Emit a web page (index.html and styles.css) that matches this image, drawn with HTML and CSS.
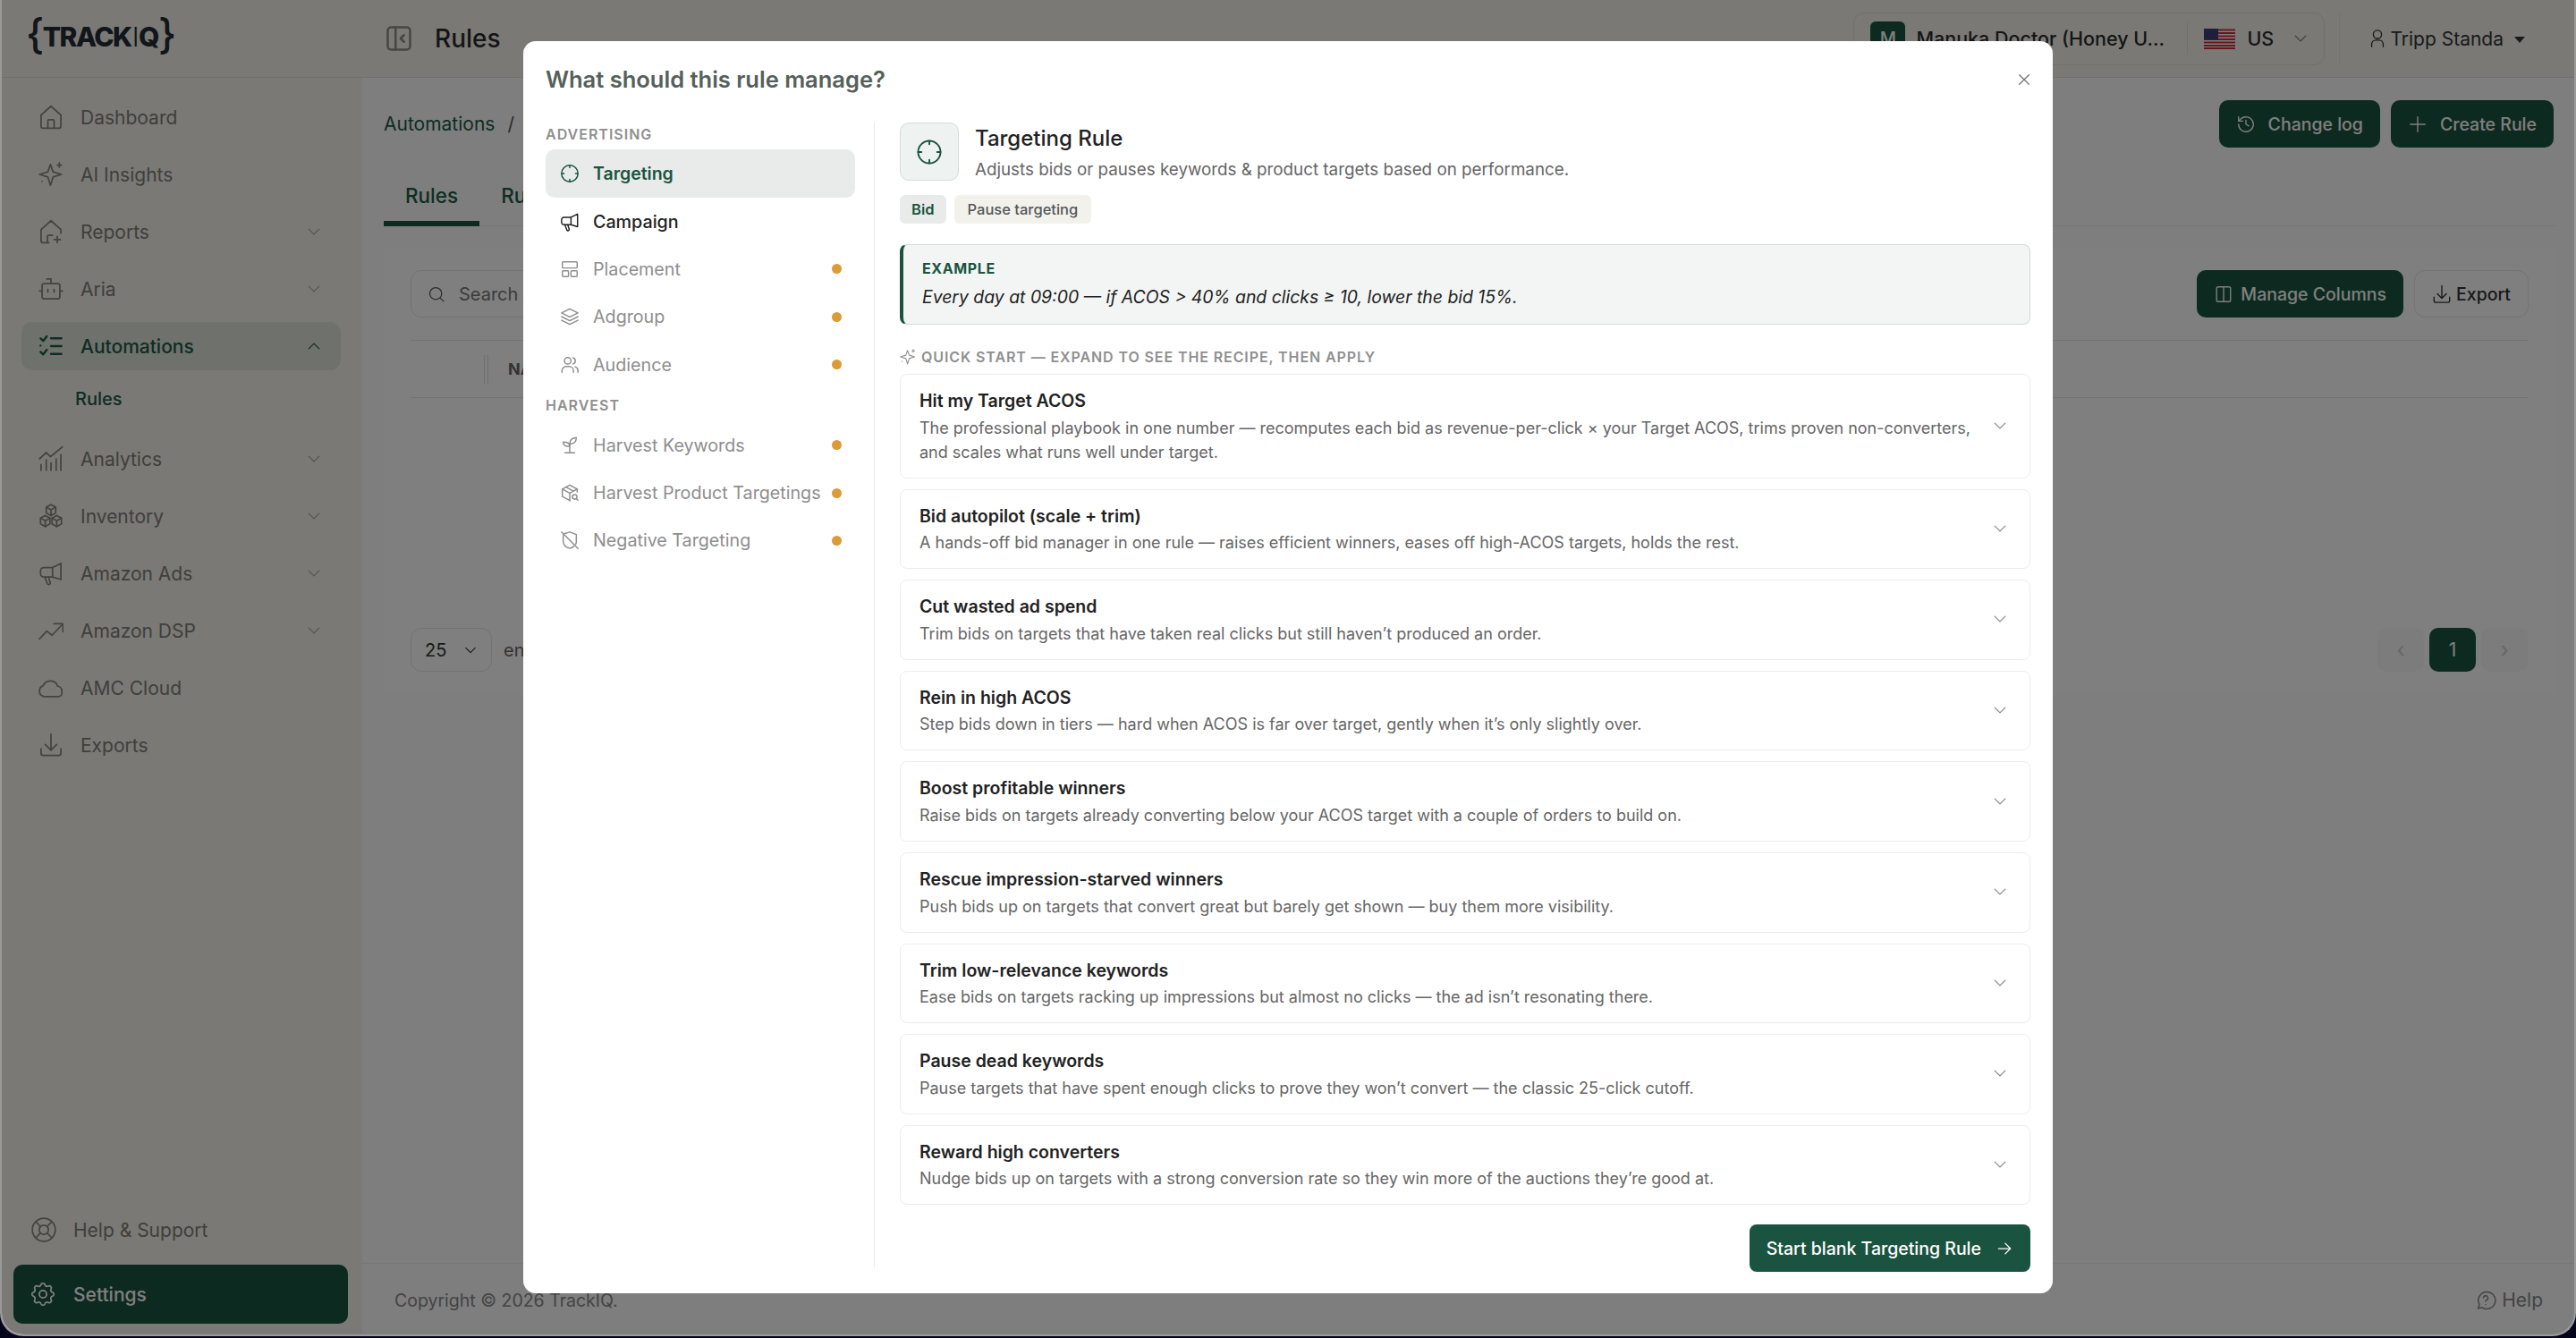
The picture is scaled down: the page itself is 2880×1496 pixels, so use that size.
FILE: index.html
```html
<!DOCTYPE html>
<html lang="en">
<head>
  <meta charset="UTF-8" />
  <title>Rules - TrackIQ</title>
  <link rel="stylesheet" href="styles.css">
</head>
<body>
  <svg class="sprite" xmlns="http://www.w3.org/2000/svg">
    <symbol id="i-home" viewBox="0 0 24 24"><path d="M2.500 10 12 1.500l9.500 8.500v10.500a2 2 0 0 1-2 2h-15a2 2 0 0 1-2-2z"/><path d="M9 22.500v-7a1 1 0 0 1 1-1h4a1 1 0 0 1 1 1v7"/></symbol>
    <symbol id="i-sparkle" viewBox="0 0 24 24"><path d="M11.500 2.500 14 9.500 22 12 14 14.500 11.500 22.500 9 14.500 1 12 9 9.500z"/><path d="M20 1v4M18 3h4M3.500 18.500h.01"/></symbol>
    <symbol id="i-homeplus" viewBox="0 0 24 24"><path d="M2.500 20.500V10L12 1.500 21.500 10v3.500"/><path d="M2.500 20.500a2 2 0 0 0 2 2H10"/><path d="M8.500 22.500v-6a1 1 0 0 1 1-1h4"/><path d="M18 16.500v6M15 19.500h6"/></symbol>
    <symbol id="i-bot" viewBox="0 0 24 24"><path d="M12 7V2.500H8"/><rect x="3.500" y="7" width="17" height="14.500" rx="2"/><path d="M1 14h2.500M20.500 14H23M9 12.500v2.500M15 12.500v2.500"/></symbol>
    <symbol id="i-checks" viewBox="0 0 24 24"><path d="M2 4.500 4.500 7 8 2.500M2 17.500 4.500 20 8 15.500" stroke-width="2"/><path d="M12 4.500h10M12 12h10M12 19.500h10M2 11.500h0" stroke-width="2"/></symbol>
    <symbol id="i-analytics" viewBox="0 0 24 24"><path d="M1 12 7.500 6l4 4L23 .5"/><path d="M2.500 17.500v5.500M7.500 13v10M12 16v7M17 12v11M21.500 8v15"/></symbol>
    <symbol id="i-boxes" viewBox="0 0 24 24"><path d="M12 1 16.500 3.500V9L12 11.500 7.500 9V3.500z"/><path d="M6.500 11.500 11 14V19.500L6.500 22 2 19.500V14z"/><path d="M17.500 11.500 22 14V19.500L17.500 22 13 19.500V14z"/><path d="M7.500 3.500l4.500 2.500 4.500-2.500M12 6v5.500M2 14l4.500 2.500L11 14M6.500 16.500V22M13 14l4.500 2.500L22 14M17.500 16.500V22"/></symbol>
    <symbol id="i-megaphone" viewBox="0 0 24 24"><path d="M21.500 2.500v15.500L13.500 15.500H5a3 3 0 0 1-3-3v-3a3 3 0 0 1 3-3h8.500z"/><path d="M6 15.500l2.500 6.500a1.500 1.500 0 0 0 2.800-1L9.500 15.500"/><path d="M13.500 6.500v9"/></symbol>
    <symbol id="i-trend" viewBox="0 0 24 24"><path d="M1 20l7-7.500 5 4L23 6"/><path d="M15 5.500h8.500V13"/></symbol>
    <symbol id="i-cloud" viewBox="0 0 24 24"><path d="M6.500 20.500A5 5 0 0 1 1 15a5.500 5.500 0 0 1 3.500-5A7.500 7.500 0 0 1 18.500 10.500a5 5 0 0 1 4 5v1.500a3.500 3.500 0 0 1-3.500 3.500z"/></symbol>
    <symbol id="i-download" viewBox="0 0 24 24"><path d="M2.500 15.500V20a2 2 0 0 0 2 2h15a2 2 0 0 0 2-2v-4.500M12 1.500v15M6.500 11.500l5.500 5.500 5.500-5.500"/></symbol>
    <symbol id="i-help" viewBox="0 0 24 24"><circle cx="12" cy="12" r="11"/><circle cx="12" cy="12" r="4.500"/><path d="M4.500 4.500 8.800 8.800M19.500 4.500 15.200 8.800M15.200 15.200 19.500 19.500M8.800 15.200 4.500 19.500"/></symbol>
    <symbol id="i-gear" viewBox="0 0 24 24"><path d="M10 3c.5-2 3.500-2 4 0a2 2 0 0 0 3 1.300c1.800-1.100 3.900 1 2.800 2.800a2 2 0 0 0 1.200 3c2 .5 2 3.500 0 4a2 2 0 0 0-1.200 3c1.100 1.800-1 3.900-2.800 2.800a2 2 0 0 0-3 1.200c-.5 2-3.500 2-4 0a2 2 0 0 0-3-1.200c-1.800 1.100-3.900-1-2.800-2.800a2 2 0 0 0-1.200-3c-2-.5-2-3.500 0-4a2 2 0 0 0 1.200-3C3.100 5.300 5.200 3.200 7 4.300A2 2 0 0 0 10 3z"/><circle cx="12" cy="12" r="3.500"/></symbol>
    <symbol id="i-chev" viewBox="0 0 24 24"><path d="M5 8.500 12 15.500 19 8.500"/></symbol>
    <symbol id="i-target" viewBox="0 0 24 24"><circle cx="12" cy="12" r="10"/><path d="M12 2v3M12 19v3M2 12h3M19 12h3"/></symbol>
    <symbol id="i-layout" viewBox="0 0 24 24"><rect x="3" y="3" width="18" height="7.500" rx="1"/><rect x="3" y="14" width="7.500" height="7" rx="1"/><rect x="13.500" y="14" width="7.500" height="7" rx="1"/></symbol>
    <symbol id="i-layers" viewBox="0 0 24 24"><path d="M12 2.500 22 7.500 12 12.500 2 7.500z"/><path d="M2 12l10 5 10-5M2 16.500l10 5 10-5"/></symbol>
    <symbol id="i-users" viewBox="0 0 24 24"><circle cx="9.500" cy="7" r="4"/><path d="M2.500 21v-2a5 5 0 0 1 5-5h4a5 5 0 0 1 5 5v2"/><path d="M16 3.200a4 4 0 0 1 0 7.600M22 21v-2a5 5 0 0 0-3.500-4.700"/></symbol>
    <symbol id="i-sprout" viewBox="0 0 24 24"><path d="M6 21h12M12 21V10"/><path d="M12 13C12 9.500 9 8 4 8c0 4 2.500 5.500 8 5z"/><path d="M12 10c0-4 3-7 8-7.500 0 5-2.500 7.500-8 7.500z"/></symbol>
    <symbol id="i-boxsearch" viewBox="0 0 24 24"><path d="M21 11V7.500L12 2.500 3 7.500v9L12 21.500"/><path d="M3 7.500 12 12.500 21 7.500M12 12.500v9M7.500 5 16.500 10"/><circle cx="18" cy="17" r="2.800"/><path d="M20 19l2 2"/></symbol>
    <symbol id="i-shieldoff" viewBox="0 0 24 24"><path d="M2 2l20 20"/><path d="M6 3.800 12 2l8 3v8.500c0 1.300-.3 2.500-.8 3.500M17 19.500c-1.500 1.200-3.200 2-5 2.500-4.500-1.300-8-4.500-8-9V5.500"/></symbol>
    <symbol id="i-history" viewBox="0 0 24 24"><path d="M3 12a9 9 0 1 0 3-6.700L3 8"/><path d="M3 3v5h5M12 7v5l3.500 2"/></symbol>
    <symbol id="i-columns" viewBox="0 0 24 24"><rect x="3.500" y="3" width="17" height="18" rx="2"/><path d="M12 3v18"/></symbol>
    <symbol id="i-search" viewBox="0 0 24 24"><circle cx="11" cy="11" r="8"/><path d="M17 17l4.500 4.500"/></symbol>
    <symbol id="i-person" viewBox="0 0 24 24"><circle cx="12" cy="7" r="5"/><path d="M5 22v-3a5 5 0 0 1 5-5h4a5 5 0 0 1 5 5v3"/></symbol>
    <symbol id="i-panel" viewBox="0 0 24 24"><rect x="2" y="2" width="20" height="20" rx="3"/><path d="M9 2v20M16.500 9l-3 3 3 3"/></symbol>
    <symbol id="i-x" viewBox="0 0 24 24"><path d="M4 4l16 16M20 4 4 20"/></symbol>
    <symbol id="i-arrow" viewBox="0 0 24 24"><path d="M4 12h16M13 5l7 7-7 7"/></symbol>
    <symbol id="i-plus" viewBox="0 0 24 24"><path d="M12 3v18M3 12h18"/></symbol>
    <symbol id="i-bubble" viewBox="0 0 24 24"><path d="M3.500 21 5 16.500A9.500 9.500 0 1 1 8 19.800z"/><path d="M9.500 9a2.500 2.500 0 1 1 3.500 2.500c-.7.300-1 .8-1 1.500M12 16.500h.01"/></symbol>
  </svg>

  <div class="app">
    <header class="topbar">
      <div class="logo"><span class="brace">{</span>TRACK<span class="logo-i">I</span>Q<span class="brace">}</span></div>
      <svg class="ico panel-toggle"><use href="#i-panel"/></svg>
      <div class="page-title">Rules</div>
      <div class="account">
        <span class="avatar">M</span>
        <span class="account-name">Manuka Doctor (Honey U...</span>
        <span class="account-sep"></span>
        <svg class="flag" viewBox="0 0 35 23">
          <rect width="35" height="23" rx="3" fill="#fff"/>
          <path d="M0 1.500h35M0 5h35M0 8.500h35M0 12h35M0 15.500h35M0 19h35M0 22h35" stroke="#c8303c" stroke-width="1.800"/>
          <rect width="16" height="12.500" fill="#3a3f7a"/>
        </svg>
        <span class="account-market">US</span>
        <svg class="ico chev-sm"><use href="#i-chev"/></svg>
      </div>
      <span class="top-sep"></span>
      <div class="user">
        <svg class="ico user-ico"><use href="#i-person"/></svg>
        <span>Tripp Standa</span>
        <span class="caret"></span>
      </div>
    </header>

    <div class="shell">
      <aside class="sidebar">
        <nav class="nav">
          <a class="nav-item"><svg class="ico"><use href="#i-home"/></svg>Dashboard</a>
          <a class="nav-item"><svg class="ico"><use href="#i-sparkle"/></svg>AI Insights</a>
          <a class="nav-item"><svg class="ico"><use href="#i-homeplus"/></svg>Reports<svg class="ico chev"><use href="#i-chev"/></svg></a>
          <a class="nav-item"><svg class="ico"><use href="#i-bot"/></svg>Aria<svg class="ico chev"><use href="#i-chev"/></svg></a>
          <a class="nav-item active"><svg class="ico"><use href="#i-checks"/></svg>Automations<svg class="ico chev up"><use href="#i-chev"/></svg></a>
          <a class="nav-sub">Rules</a>
          <a class="nav-item"><svg class="ico"><use href="#i-analytics"/></svg>Analytics<svg class="ico chev"><use href="#i-chev"/></svg></a>
          <a class="nav-item"><svg class="ico"><use href="#i-boxes"/></svg>Inventory<svg class="ico chev"><use href="#i-chev"/></svg></a>
          <a class="nav-item"><svg class="ico"><use href="#i-megaphone"/></svg>Amazon Ads<svg class="ico chev"><use href="#i-chev"/></svg></a>
          <a class="nav-item"><svg class="ico"><use href="#i-trend"/></svg>Amazon DSP<svg class="ico chev"><use href="#i-chev"/></svg></a>
          <a class="nav-item"><svg class="ico"><use href="#i-cloud"/></svg>AMC Cloud</a>
          <a class="nav-item"><svg class="ico"><use href="#i-download"/></svg>Exports</a>
        </nav>
        <div class="side-bottom">
          <a class="nav-item"><svg class="ico"><use href="#i-help"/></svg>Help &amp; Support</a>
          <a class="settings"><svg class="ico"><use href="#i-gear"/></svg>Settings</a>
        </div>
      </aside>

      <main class="main">
        <div class="crumb-row">
          <div class="crumbs"><a>Automations</a><span class="crumb-sep">/</span></div>
          <div class="actions">
            <button class="btn"><svg class="ico btn-ico"><use href="#i-history"/></svg>Change log</button>
            <button class="btn"><svg class="ico btn-ico"><use href="#i-plus"/></svg>Create Rule</button>
          </div>
        </div>
        <div class="tabs">
          <a class="tab on">Rules</a>
          <a class="tab">Rule runs</a>
        </div>
        <section class="panel">
          <div class="panel-tools">
            <div class="search"><svg class="ico search-ico"><use href="#i-search"/></svg>Search</div>
            <button class="btn btn-tight"><svg class="ico btn-ico"><use href="#i-columns"/></svg>Manage Columns</button>
            <button class="btn-ghost"><svg class="ico export-ico"><use href="#i-download"/></svg>Export</button>
          </div>
          <div class="thead"><span class="grip"></span><span>NAME</span></div>
          <div class="tbody"></div>
          <div class="panel-foot">
            <div class="page-size">25<svg class="ico size-chev"><use href="#i-chev"/></svg></div>
            <span class="entries">entries per page</span>
            <div class="pager">
              <span class="pager-arrow">&#8249;</span>
              <span class="pager-num">1</span>
              <span class="pager-arrow">&#8250;</span>
            </div>
          </div>
        </section>
        <footer class="footer">
          <span>Copyright &copy; 2026 TrackIQ.</span>
          <span class="foot-help"><svg class="ico foot-ico"><use href="#i-bubble"/></svg>Help</span>
        </footer>
      </main>
    </div>

    <div class="backdrop">
      <div class="modal">
        <div class="modal-head">
          <h2>What should this rule manage?</h2>
          <svg class="ico close"><use href="#i-x"/></svg>
        </div>
        <div class="modal-body">
          <div class="types">
            <div class="types-label">ADVERTISING</div>
            <a class="type selected"><svg class="ico"><use href="#i-target"/></svg>Targeting</a>
            <a class="type ready"><svg class="ico"><use href="#i-megaphone"/></svg>Campaign</a>
            <a class="type"><svg class="ico"><use href="#i-layout"/></svg>Placement<i class="dot"></i></a>
            <a class="type"><svg class="ico"><use href="#i-layers"/></svg>Adgroup<i class="dot"></i></a>
            <a class="type"><svg class="ico"><use href="#i-users"/></svg>Audience<i class="dot"></i></a>
            <div class="types-label second">HARVEST</div>
            <a class="type"><svg class="ico"><use href="#i-sprout"/></svg>Harvest Keywords<i class="dot"></i></a>
            <a class="type"><svg class="ico"><use href="#i-boxsearch"/></svg>Harvest Product Targetings<i class="dot"></i></a>
            <a class="type"><svg class="ico"><use href="#i-shieldoff"/></svg>Negative Targeting<i class="dot"></i></a>
          </div>
          <div class="detail">
            <div class="detail-head">
              <div class="detail-icon"><svg class="ico"><use href="#i-target"/></svg></div>
              <div>
                <div class="detail-title">Targeting Rule</div>
                <div class="detail-desc">Adjusts bids or pauses keywords &amp; product targets based on performance.</div>
              </div>
            </div>
            <div class="chips">
              <span class="chip green">Bid</span>
              <span class="chip">Pause targeting</span>
            </div>
            <div class="example">
              <div class="example-label">EXAMPLE</div>
              <div class="example-text">Every day at 09:00 — if ACOS &gt; 40% and clicks ≥ 10, lower the bid 15%.</div>
            </div>
            <div class="quick"><svg class="ico"><use href="#i-sparkle"/></svg>QUICK START — EXPAND TO SEE THE RECIPE, THEN APPLY</div>
            <div class="recipes">
              <div class="recipe">
                <div class="recipe-text">
                  <div class="recipe-title">Hit my Target ACOS</div>
                  <div class="recipe-desc">The professional playbook in one number — recomputes each bid as revenue-per-click × your Target ACOS, trims proven non-converters, and scales what runs well under target.</div>
                </div>
                <svg class="ico recipe-chev"><use href="#i-chev"/></svg>
              </div>
              <div class="recipe">
                <div class="recipe-text">
                  <div class="recipe-title">Bid autopilot (scale + trim)</div>
                  <div class="recipe-desc">A hands-off bid manager in one rule — raises efficient winners, eases off high-ACOS targets, holds the rest.</div>
                </div>
                <svg class="ico recipe-chev"><use href="#i-chev"/></svg>
              </div>
              <div class="recipe">
                <div class="recipe-text">
                  <div class="recipe-title">Cut wasted ad spend</div>
                  <div class="recipe-desc">Trim bids on targets that have taken real clicks but still haven’t produced an order.</div>
                </div>
                <svg class="ico recipe-chev"><use href="#i-chev"/></svg>
              </div>
              <div class="recipe">
                <div class="recipe-text">
                  <div class="recipe-title">Rein in high ACOS</div>
                  <div class="recipe-desc">Step bids down in tiers — hard when ACOS is far over target, gently when it’s only slightly over.</div>
                </div>
                <svg class="ico recipe-chev"><use href="#i-chev"/></svg>
              </div>
              <div class="recipe">
                <div class="recipe-text">
                  <div class="recipe-title">Boost profitable winners</div>
                  <div class="recipe-desc">Raise bids on targets already converting below your ACOS target with a couple of orders to build on.</div>
                </div>
                <svg class="ico recipe-chev"><use href="#i-chev"/></svg>
              </div>
              <div class="recipe">
                <div class="recipe-text">
                  <div class="recipe-title">Rescue impression-starved winners</div>
                  <div class="recipe-desc">Push bids up on targets that convert great but barely get shown — buy them more visibility.</div>
                </div>
                <svg class="ico recipe-chev"><use href="#i-chev"/></svg>
              </div>
              <div class="recipe">
                <div class="recipe-text">
                  <div class="recipe-title">Trim low-relevance keywords</div>
                  <div class="recipe-desc">Ease bids on targets racking up impressions but almost no clicks — the ad isn’t resonating there.</div>
                </div>
                <svg class="ico recipe-chev"><use href="#i-chev"/></svg>
              </div>
              <div class="recipe">
                <div class="recipe-text">
                  <div class="recipe-title">Pause dead keywords</div>
                  <div class="recipe-desc">Pause targets that have spent enough clicks to prove they won’t convert — the classic 25-click cutoff.</div>
                </div>
                <svg class="ico recipe-chev"><use href="#i-chev"/></svg>
              </div>
              <div class="recipe">
                <div class="recipe-text">
                  <div class="recipe-title">Reward high converters</div>
                  <div class="recipe-desc">Nudge bids up on targets with a strong conversion rate so they win more of the auctions they’re good at.</div>
                </div>
                <svg class="ico recipe-chev"><use href="#i-chev"/></svg>
              </div>
            </div>
            <div class="detail-foot">
              <button class="start">Start blank Targeting Rule<svg class="ico"><use href="#i-arrow"/></svg></button>
            </div>
          </div>
        </div>
      </div>
    </div>
  </div>
</body>
</html>
```

FILE: styles.css
```css
* {
  box-sizing: border-box;
}
html, body {
  margin: 0;
  height: 100%;
  overflow: hidden;
}
body {
  background: #04041c;
  font-family: "Inter", "Liberation Sans", sans-serif;
  color: #222;
}
.sprite {
  display: none;
}
.ico {
  width: 28px;
  height: 28px;
  flex: none;
  fill: none;
  stroke: currentColor;
  stroke-width: 1.5;
  stroke-linecap: round;
  stroke-linejoin: round;
}

.app {
  position: relative;
  height: 1494px;
  margin: 0;
  display: flex;
  flex-direction: column;
  background: #fcfcfc;
  border-left: 2px solid #9a9a9a;
  border-right: 2px solid #9a9a9a;
  border-bottom: 2px solid #9a9a9a;
  border-radius: 0 0 26px 26px;
  overflow: hidden;
}

/* top bar */
.topbar {
  height: 87px;
  flex: none;
  display: flex;
  align-items: center;
  background: #f4f3ec;
  border-bottom: 1px solid #e0ded6;
  padding: 0 55px 0 27px;
}
.logo {
  width: 402px;
  font-size: 30px;
  font-weight: 800;
  letter-spacing: -1.500px;
  color: #252c36;
  display: flex;
  align-items: center;
  margin-top: -4px;
}
.brace {
  font-size: 46px;
  font-weight: 500;
  line-height: 1;
  margin-top: -6px;
}
.logo-i {
  font-weight: 300;
  margin: 0 1px;
}
.panel-toggle {
  width: 30px;
  height: 30px;
  color: #8c8c88;
  stroke-width: 2;
}
.page-title {
  margin-left: 25px;
  font-size: 28px;
  font-weight: 500;
  color: #2a2a2a;
  flex: 1;
}
.account {
  width: 527px;
  height: 59px;
  display: flex;
  align-items: center;
  border: 1px solid #e2e0d8;
  border-radius: 12px;
  padding-left: 18px;
  font-size: 21.500px;
  font-weight: 500;
  color: #2a2a2a;
  margin-right: 16px;
}
.avatar {
  width: 39px;
  height: 39px;
  border-radius: 6px;
  background: #1a5440;
  color: #fff;
  font-size: 20px;
  display: flex;
  align-items: center;
  justify-content: center;
  flex: none;
}
.account-name {
  margin-left: 12px;
  width: 303px;
  white-space: nowrap;
}
.account-sep {
  width: 1px;
  height: 36px;
  background: #e0ded6;
}
.flag {
  margin-left: 18px;
  width: 35px;
  height: 23px;
}
.account-market {
  margin-left: 13px;
}
.chev-sm {
  width: 20px;
  height: 20px;
  margin-left: 20px;
  color: #777;
}
.top-sep {
  width: 1px;
  height: 59px;
  background: #e6e4dc;
}
.user {
  display: flex;
  align-items: center;
  margin-left: 31px;
  font-size: 21px;
  color: #333;
}
.user-ico {
  width: 22px;
  height: 22px;
  margin-right: 3px;
}
.caret {
  margin-left: 12px;
  margin-top: 3px;
  border-left: 6px solid transparent;
  border-right: 6px solid transparent;
  border-top: 7px solid #333;
}

.shell {
  flex: 1;
  display: flex;
  min-height: 0;
}

/* sidebar */
.sidebar {
  width: 403px;
  flex: none;
  display: flex;
  flex-direction: column;
  background: #f4f3ec;
  padding: 12px 24px 12px 22px;
  font-size: 21px;
}
.nav {
  flex: 1;
}
.nav-item {
  height: 64px;
  display: flex;
  align-items: center;
  gap: 19px;
  padding: 0 19px;
  color: #7e7e78;
  border-radius: 12px;
}
.nav-item .ico {
  color: #86867f;
}
.nav-item .chev {
  width: 20px;
  height: 20px;
  margin-left: auto;
  margin-right: 1px;
  color: #a8a69c;
}
.nav-item.active {
  height: 54px;
  margin: 5px 0;
  background: #dfe2d9;
  color: #1d5a46;
  font-weight: 500;
}
.nav-item.active .ico {
  color: #1d5a46;
}
.nav-item.active .chev.up {
  transform: rotate(180deg);
}
.nav-sub {
  display: flex;
  align-items: center;
  height: 54px;
  margin-bottom: 8px;
  padding-left: 60px;
  color: #1d5a46;
  font-weight: 500;
  font-size: 20px;
}
.side-bottom {
  display: flex;
  flex-direction: column;
  margin-left: -9px;
}
.side-bottom .nav-item {
  height: 66px;
  margin-bottom: 6px;
  padding: 0 20px;
  gap: 19px;
}
.settings {
  display: flex;
  align-items: center;
  gap: 20px;
  width: 374px;
  height: 66px;
  padding: 0 19px;
  border-radius: 10px;
  background: #1a5440;
  color: #fff;
  font-weight: 500;
}

/* main */
.main {
  flex: 1;
  min-width: 0;
  display: flex;
  flex-direction: column;
}
.crumb-row {
  display: flex;
  align-items: center;
  justify-content: space-between;
  padding: 25px 23px 0 24px;
}
.crumbs {
  font-size: 21px;
  color: #1d5a46;
}
.crumb-sep {
  margin-left: 14px;
  color: #555;
}
.actions {
  display: flex;
  gap: 12px;
}
.btn {
  height: 53px;
  display: flex;
  align-items: center;
  gap: 14px;
  padding: 0 19px;
  border: none;
  border-radius: 10px;
  background: #1a5440;
  color: #fff;
  font: 500 19.500px "Inter", sans-serif;
}
.btn-tight {
  gap: 8px;
  margin-left: auto;
}
.btn-ico {
  width: 22px;
  height: 22px;
}
.tabs {
  display: flex;
  margin: 30px 21px 0 24px;
  height: 58px;
  border-bottom: 1px solid #ececec;
  font-size: 22.500px;
  color: #1d5a46;
}
.tab {
  padding: 10px 24px 0;
  font-weight: 500;
}
.tab.on {
  border-bottom: 6px solid #1a5440;
  height: 58px;
}
.panel {
  margin: 25px 21px 0 24px;
  padding: 24px 30px;
  background: #fff;
}
.panel-tools {
  display: flex;
  align-items: center;
  gap: 12px;
  padding-bottom: 25px;
  border-bottom: 1px solid #e4e4e4;
}
.search {
  width: 520px;
  height: 53px;
  display: flex;
  align-items: center;
  gap: 15px;
  padding: 0 18px;
  border: 1px solid #e4e4e4;
  border-radius: 12px;
  color: #777;
  font-size: 20px;
}
.search-ico {
  width: 20px;
  height: 20px;
  color: #555;
}
.btn-ghost {
  height: 53px;
  display: flex;
  align-items: center;
  gap: 5px;
  padding: 0 19px;
  background: none;
  border: 1px solid #e6e6e6;
  border-radius: 12px;
  color: #333;
  font: 500 19.500px "Inter", sans-serif;
}
.export-ico {
  width: 22px;
  height: 22px;
}
.thead {
  height: 64px;
  display: flex;
  align-items: center;
  padding-left: 82px;
  gap: 22px;
  border-bottom: 1px solid #e4e4e4;
  font-size: 18px;
  font-weight: 700;
  color: #666;
}
.grip {
  width: 5px;
  height: 32px;
  border-left: 1px solid #ddd;
  border-right: 1px solid #ddd;
}
.tbody {
  height: 257px;
}
.panel-foot {
  display: flex;
  align-items: center;
}
.page-size {
  width: 91px;
  height: 49px;
  display: flex;
  align-items: center;
  gap: 18px;
  padding-left: 15px;
  border: 1px solid #e4e4e4;
  border-radius: 12px;
  font-size: 20px;
  color: #333;
}
.size-chev {
  width: 18px;
  height: 18px;
  color: #333;
}
.entries {
  margin-left: 13px;
  font-size: 20px;
  color: #666;
}
.pager {
  margin-left: auto;
  display: flex;
  align-items: center;
  gap: 6px;
  margin-right: 1px;
  color: #ccc;
  font-size: 24px;
}
.pager-arrow {
  width: 52px;
  height: 49px;
  display: flex;
  align-items: center;
  justify-content: center;
  background: #f8f8f8;
  border-radius: 10px;
}
.pager-num {
  width: 52px;
  height: 49px;
  display: flex;
  align-items: center;
  justify-content: center;
  border-radius: 10px;
  background: #1a5440;
  color: #fff;
  font-size: 21px;
}
.footer {
  margin-top: auto;
  height: 80px;
  display: flex;
  align-items: center;
  justify-content: space-between;
  padding: 2px 35px 0 36px;
  border-top: 1px solid #ececec;
  font-size: 19.500px;
  color: #888;
}
.foot-help {
  display: flex;
  align-items: center;
  gap: 6px;
  font-size: 21px;
}
.foot-ico {
  width: 24px;
  height: 24px;
}

/* modal */
.backdrop {
  position: absolute;
  inset: 0;
  background: rgba(0, 0, 0, 0.5);
  display: flex;
  align-items: center;
  justify-content: center;
}
.modal {
  width: 1710px;
  height: 1400px;
  background: #fff;
  border-radius: 14px;
  padding: 0 25px 24px;
  display: flex;
  flex-direction: column;
}
.modal-head {
  height: 91px;
  flex: none;
  display: flex;
  align-items: center;
  justify-content: space-between;
}
.modal-head h2 {
  margin: 0 0 6px;
  font-size: 25.500px;
  font-weight: 600;
  color: #56605a;
}
.close {
  width: 16px;
  height: 16px;
  color: #777;
  stroke-width: 2;
  margin: 0 -1px 6px 0;
}
.modal-body {
  flex: 1;
  min-height: 0;
  display: flex;
}
.types {
  width: 368px;
  flex: none;
  padding-right: 21px;
  border-right: 1px solid #e8e8e8;
  margin-bottom: 5px;
}
.types-label {
  height: 20px;
  margin: 3px 0 7px;
  font-size: 16px;
  line-height: 20px;
  font-weight: 600;
  letter-spacing: 1px;
  color: #8f8f8f;
}
.types-label.second {
  margin: 9px 0 8px;
}
.type {
  height: 53.300px;
  display: flex;
  align-items: center;
  padding: 0 16px;
  font-size: 19.700px;
  color: #8e8e8e;
  border-radius: 10px;
  white-space: nowrap;
}
.type .ico {
  width: 22px;
  height: 22px;
  margin-right: 15px;
  stroke-width: 1.600;
}
.type.selected {
  background: #e8ebea;
  color: #1a5440;
  font-weight: 600;
  font-size: 19.500px;
  height: 54px;
}
.type.ready {
  color: #222;
  font-weight: 500;
}
.dot {
  margin-left: auto;
  width: 11px;
  height: 11px;
  border-radius: 50%;
  background: #dd9a38;
  flex: none;
  margin-right: -1px;
}
.detail {
  flex: 1;
  min-width: 0;
  padding-left: 28px;
  display: flex;
  flex-direction: column;
}
.detail-head {
  display: flex;
  gap: 18px;
}
.detail-icon {
  width: 66px;
  height: 65px;
  flex: none;
  display: flex;
  align-items: center;
  justify-content: center;
  background: #eef2f0;
  border: 1px solid #d3dcd8;
  border-radius: 10px;
  color: #1a5440;
}
.detail-icon .ico {
  width: 30px;
  height: 30px;
}
.detail-title {
  margin-top: 2px;
  font-size: 24px;
  line-height: 32px;
  font-weight: 500;
  color: #222;
}
.detail-desc {
  margin-top: 5px;
  font-size: 18.800px;
  line-height: 28px;
  color: #666;
}
.chips {
  display: flex;
  gap: 9px;
  margin-top: 14px;
}
.chip {
  height: 32px;
  display: flex;
  align-items: center;
  padding: 0 15px;
  border-radius: 6px;
  background: #f3f1ec;
  font-size: 16.500px;
  font-weight: 500;
  color: #55585a;
}
.chip.green {
  background: #e8ebea;
  color: #1a5440;
  font-weight: 600;
  padding: 0 13px;
}
.example {
  height: 90px;
  margin-top: 23px;
  padding: 16px 21px 0;
  background: #f3f5f4;
  border: 1.5px solid #d2dad7;
  border-left: 4px solid #1a5440;
  border-radius: 8px;
}
.example-label {
  font-size: 16px;
  line-height: 20px;
  font-weight: 700;
  letter-spacing: 0.6px;
  color: #1a5440;
}
.example-text {
  margin-top: 9px;
  font-size: 19.400px;
  line-height: 26px;
  font-style: italic;
  color: #222;
}
.quick {
  height: 20px;
  margin: 26px 0 9px;
  display: flex;
  align-items: center;
  gap: 6px;
  font-size: 16px;
  font-weight: 600;
  letter-spacing: 0.9px;
  color: #8f8f8f;
}
.quick .ico {
  width: 18px;
  height: 18px;
}
.recipes {
  display: flex;
  flex-direction: column;
  gap: 12px;
}
.recipe {
  display: flex;
  align-items: center;
  gap: 20px;
  padding: 14px 23px 15px 21px;
  border: 1px solid #ececec;
  border-radius: 8px;
}
.recipe-text {
  flex: 1;
  min-width: 0;
}
.recipe-title {
  font-size: 19.500px;
  line-height: 31.600px;
  font-weight: 600;
  color: #222;
}
.recipe-desc {
  font-size: 18px;
  line-height: 27px;
  color: #666;
}
.recipe-chev {
  width: 20px;
  height: 20px;
  color: #888;
}
.detail-foot {
  margin-top: auto;
  display: flex;
  justify-content: flex-end;
}
.start {
  height: 53px;
  display: flex;
  align-items: center;
  gap: 16px;
  padding: 0 19px;
  border: none;
  border-radius: 8px;
  background: #1a5440;
  color: #fff;
  font: 500 19.500px "Inter", sans-serif;
}
.start .ico {
  width: 20px;
  height: 20px;
}
```
